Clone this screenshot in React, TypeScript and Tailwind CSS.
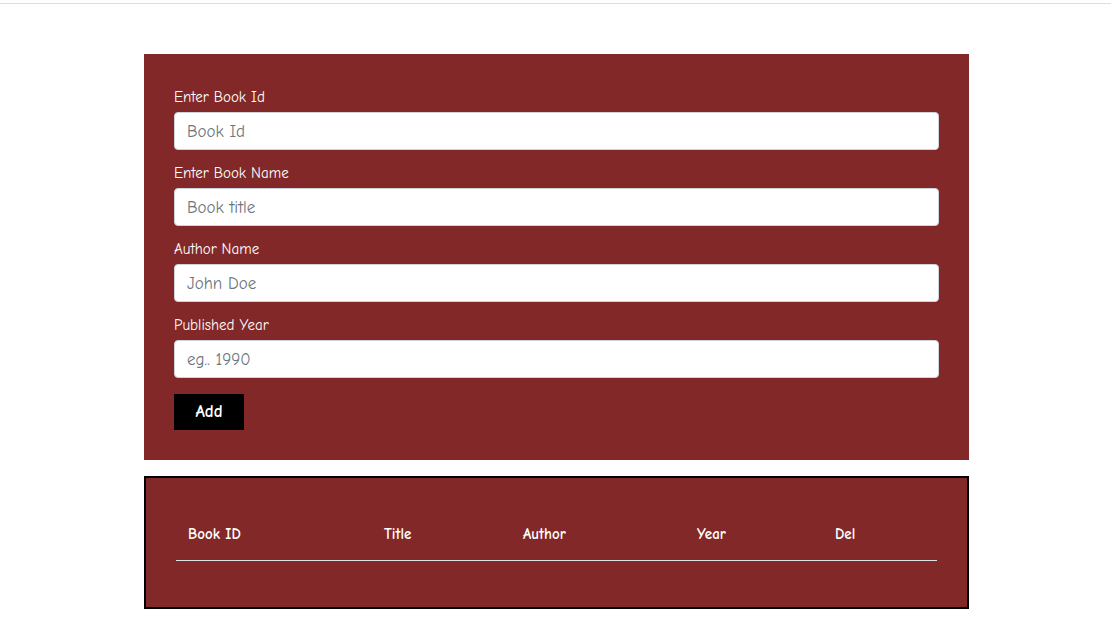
import React from "react";

const font = { fontFamily: '"Comic Sans MS", "Comic Neue", cursive' };

function Field({ label, placeholder }: { label: string; placeholder: string }) {
  return (
    <div className="mb-[10px]">
      <label className="block text-[15px] leading-[21px] text-white pt-[3px] mb-[4px]">{label}</label>
      <input
        className="block w-full h-[38px] rounded-[4px] border border-[#ced4da] bg-white px-[12px] text-[17px] text-[#495057] placeholder:text-[#6c757d] outline-none"
        placeholder={placeholder}
        style={font}
      />
    </div>
  );
}

export default function App() {
  return (
    <div className="min-h-[625px] bg-white" style={font}>
      <div className="h-[4px] border-b border-[#dedede]" />
      <div className="w-[825px] ml-[144px] mt-[50px]">
        <div className="bg-[#822828] px-[30px] pt-[30px] pb-[30px]">
          <Field label="Enter Book Id" placeholder="Book Id" />
          <Field label="Enter Book Name" placeholder="Book title" />
          <Field label="Author Name" placeholder="John Doe" />
          <Field label="Published Year" placeholder="eg.. 1990" />
          <button
            className="mt-[16px] block w-[70px] h-[36px] bg-black text-white text-[17px] font-bold"
            style={font}
          >
            Add
          </button>
        </div>
        <div className="mt-[16px] border-2 border-black bg-[#822828] px-[30px] pt-[30px] pb-[46px]">
          <div className="grid grid-cols-[196px_139px_174px_138px_114px] h-[53px] items-center border-b border-[#dee2e6] text-white font-bold text-[15px]">
            <div className="pl-[12px]">Book ID</div>
            <div className="pl-[12px]">Title</div>
            <div className="pl-[12px]">Author</div>
            <div className="pl-[12px]">Year</div>
            <div className="pl-[12px]">Del</div>
          </div>
        </div>
      </div>
    </div>
  );
}
